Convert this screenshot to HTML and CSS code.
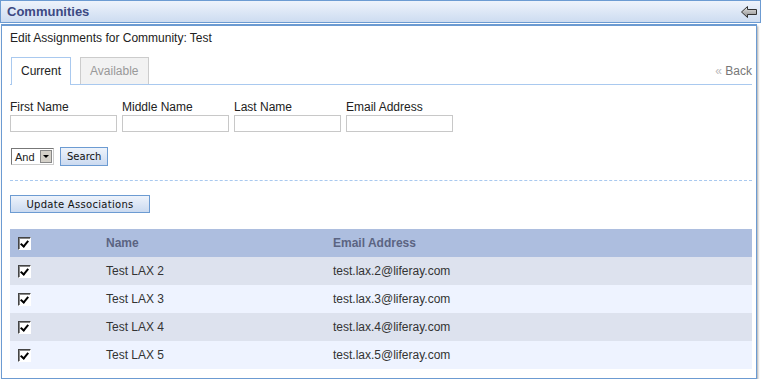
FILE: index.html
```html
<!DOCTYPE html>
<html lang="en">
<head>
  <meta charset="UTF-8" />
  <title>Communities</title>
  <link rel="stylesheet" href="styles.css">
</head>
<body>
  <div class="portlet">
    <div class="portlet-title">
      <h2>Communities</h2>
      <svg class="back-icon" width="16" height="12" viewBox="0 0 16 12">
        <defs>
          <linearGradient id="arrowFill" x1="0" y1="0" x2="0" y2="1">
            <stop offset="0" stop-color="#e8e8e8"/>
            <stop offset="1" stop-color="#8a8a8a"/>
          </linearGradient>
        </defs>
        <path d="M0.5 6 L6.5 0.5 L6.5 3.5 L15.5 3.5 L15.5 8.5 L6.5 8.5 L6.5 11.5 Z" fill="url(#arrowFill)" stroke="#333" stroke-width="1" stroke-linejoin="miter"/>
      </svg>
    </div>

    <div class="portlet-body">
      <div class="page-heading">Edit Assignments for Community: Test</div>

      <div class="tabs">
        <span class="tab current">Current</span>
        <span class="tab">Available</span>
        <a class="back-link" href="#"><span class="raquo">&laquo;</span> Back</a>
      </div>

      <div class="search-fields">
        <label class="field">First Name<input type="text" /></label>
        <label class="field">Middle Name<input type="text" /></label>
        <label class="field">Last Name<input type="text" /></label>
        <label class="field">Email Address<input type="text" /></label>
      </div>

      <div class="search-actions">
        <div class="select-box">
          <span class="select-value">And</span>
          <span class="select-arrow"></span>
        </div>
        <button class="btn" type="button">Search</button>
      </div>

      <div class="separator"></div>

      <button class="btn btn-wide" type="button">Update Associations</button>

      <table class="results">
        <thead>
          <tr>
            <th class="col-check"><span class="check"></span></th>
            <th class="col-name">Name</th>
            <th>Email Address</th>
          </tr>
        </thead>
        <tbody>
          <tr>
            <td class="col-check"><span class="check"></span></td>
            <td class="col-name">Test LAX 2</td>
            <td>test.lax.2@liferay.com</td>
          </tr>
          <tr class="alt">
            <td class="col-check"><span class="check"></span></td>
            <td class="col-name">Test LAX 3</td>
            <td>test.lax.3@liferay.com</td>
          </tr>
          <tr>
            <td class="col-check"><span class="check"></span></td>
            <td class="col-name">Test LAX 4</td>
            <td>test.lax.4@liferay.com</td>
          </tr>
          <tr class="alt">
            <td class="col-check"><span class="check"></span></td>
            <td class="col-name">Test LAX 5</td>
            <td>test.lax.5@liferay.com</td>
          </tr>
        </tbody>
      </table>
    </div>
  </div>
</body>
</html>
```

FILE: styles.css
```css
body {
  margin: 0;
  background: #fff;
  font-family: "Liberation Sans", Arial, sans-serif;
  font-size: 12px;
  color: #222;
}

.portlet {
  width: 761px;
}

.portlet-title {
  display: flex;
  align-items: center;
  justify-content: space-between;
  height: 21px;
  padding: 0 3px 0 6px;
  border: 1px solid #6c9bd2;
  background: linear-gradient(#eef3fb, #cddcf1);
}

.portlet-title h2 {
  margin: 0;
  font-size: 13px;
  font-weight: bold;
  color: #3c4983;
}

.back-icon {
  display: block;
}

.portlet-body {
  margin: 1px 4px 0 1px;
  padding: 5px 4px 9px 8px;
  border: 1px solid #6c9bd2;
  border-top-width: 2px;
  box-shadow: 1px 2px 2px rgba(0, 0, 0, 0.35);
}

.page-heading {
  height: 20px;
  line-height: 14px;
  color: #222;
}

.tabs {
  display: flex;
  align-items: flex-end;
  gap: 9px;
  height: 27px;
  margin-top: 6px;
  padding-left: 1px;
  border-bottom: 1px solid #a9c9ef;
}

.tab {
  height: 26px;
  line-height: 27px;
  padding: 0 9px;
  border: 1px solid #ccc;
  border-bottom: none;
  background: #f2f2f2;
  color: #999;
}

.tab.current {
  height: 27px;
  margin-bottom: -1px;
  border-color: #a9c9ef;
  background: #fff;
  color: #222;
}

.back-link {
  margin-left: auto;
  padding-bottom: 6px;
  color: #777;
  text-decoration: none;
}

.raquo {
  color: #bbb;
}

.search-fields {
  display: grid;
  grid-template-columns: repeat(4, 107px);
  gap: 5px;
  margin-top: 15px;
}

.field {
  display: flex;
  flex-direction: column;
  gap: 1px;
  line-height: 14px;
  color: #222;
}

.field input {
  box-sizing: border-box;
  width: 107px;
  height: 17px;
  margin: 0;
  border: 1px solid #c8c8c8;
  padding: 0 2px;
}

.search-actions {
  display: flex;
  align-items: center;
  gap: 6px;
  margin-top: 15px;
  padding-left: 1px;
}

.select-box {
  display: flex;
  align-items: center;
  box-sizing: border-box;
  width: 43px;
  height: 17px;
  padding: 1px;
  border: 1px solid #777;
  border-right-color: #ccc;
  border-bottom-color: #ccc;
  background: #fff;
  font-size: 11px;
}

.select-value {
  flex: 1;
  padding-left: 2px;
}

.select-arrow {
  position: relative;
  width: 12px;
  height: 13px;
  box-sizing: border-box;
  border: 1px solid #888;
  background: #d4d0c8;
}

.select-arrow::after {
  content: "";
  position: absolute;
  left: 2px;
  top: 4px;
  border-left: 3px solid transparent;
  border-right: 3px solid transparent;
  border-top: 3px solid #000;
}

.btn {
  height: 19px;
  padding: 0 6px;
  border: 1px solid #6c9bd2;
  background: linear-gradient(#eef3fb, #cbdaf0);
  font-family: "DejaVu Sans", sans-serif;
  font-size: 10px;
  color: #111;
}

.separator {
  margin: 14px 0 14px 0;
  border-top: 1px dashed #a9c9ef;
}

.btn-wide {
  width: 140px;
  height: 18px;
  letter-spacing: 0.3px;
}

.results {
  width: 742px;
  margin-top: 16px;
  border-collapse: collapse;
}

.results th,
.results td {
  height: 28px;
  padding: 0;
  text-align: left;
  background: #dde2ee;
  color: #333;
}

.results tr.alt td {
  background: #eef3ff;
}

.results th {
  background: #adbedf;
  color: #5b6482;
  font-weight: bold;
}

.col-check {
  width: 88px;
  padding-left: 8px !important;
}

.col-name {
  width: 227px;
}

.check {
  display: block;
  position: relative;
  box-sizing: border-box;
  width: 13px;
  height: 13px;
  border: 1px solid #fff;
  border-top-color: #444;
  border-left-color: #444;
  background: #fff;
  box-shadow: inset 1px 1px 0 #888;
}

.check::after {
  content: "";
  position: absolute;
  left: 3px;
  top: 1px;
  width: 3px;
  height: 6px;
  border-right: 2px solid #000;
  border-bottom: 2px solid #000;
  transform: rotate(40deg);
}
```
